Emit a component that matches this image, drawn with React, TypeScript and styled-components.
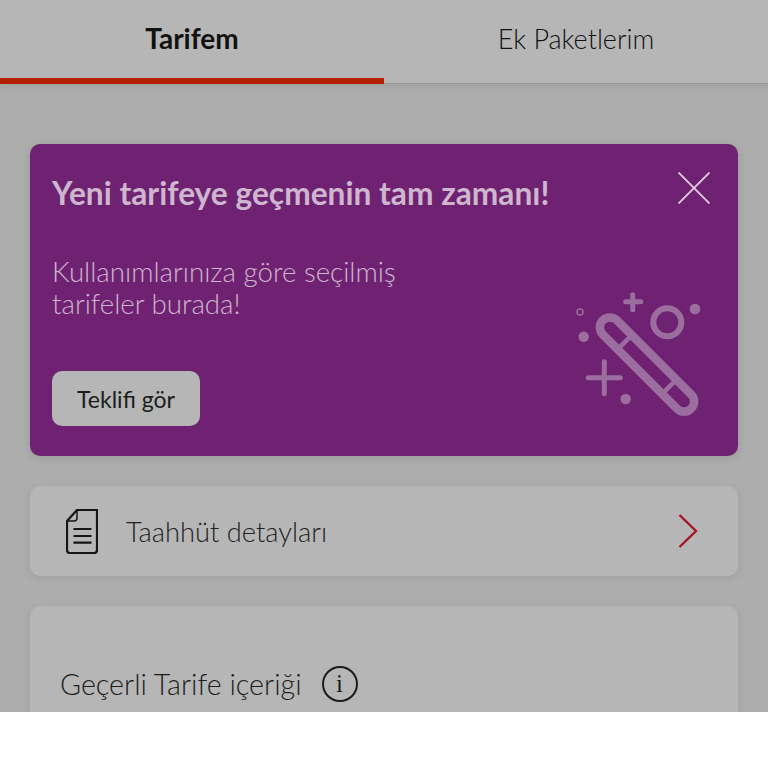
import React from 'react';
import styled, { createGlobalStyle } from 'styled-components';

const GlobalStyle = createGlobalStyle`
  html, body {
    margin: 0;
    padding: 0;
    background-color: #ffffff;
    font-family: "Lato", "Liberation Sans", sans-serif;
  }
`;

const Page = styled.div`
  height: 712px;
  overflow: hidden;
  background-color: #adadad;
`;

const Tabs = styled.div`
  display: flex;
  height: 84px;
  background-color: #b6b6b6;
  box-shadow: 0 2px 8px rgba(0, 0, 0, 0.08);
`;
const Tab = styled.div<{active?:boolean}>`
  flex: 1;
  display: flex;
  align-items: center;
  justify-content: center;
  box-sizing: border-box;
  height: 84px;
  padding-bottom: ${props => props.active ? '2px' : '7px'};
  font-size: ${props => props.active ? '28px' : '27px'};
  font-weight: ${props => props.active ? '700' : '300'};
  color: #111111;
  border-bottom: ${props => props.active ? '6px solid #b32000' : '1px solid #979797'};
`;

const Content = styled.div`
  display: flex;
  flex-direction: column;
  gap: 30px;
  padding: 60px 30px 0;
`;

const Promo = styled.div`
  display: flex;
  justify-content: space-between;
  height: 312px;
  box-sizing: border-box;
  padding: 28px 28px 33px 22px;
  border-radius: 10px;
  background-color: #702272;
  box-shadow: 0 2px 8px rgba(0, 0, 0, 0.12);
`;
const PromoText = styled.div`
  display: flex;
  flex-direction: column;
  align-items: flex-start;
  padding-top: 2px;
`;
const PromoTitle = styled.div`
  font-size: 31.7px;
  line-height: 38px;
  font-weight: 700;
  color: #cdb6ce;
  white-space: nowrap;
`;
const PromoBody = styled.div`
  margin-top: 44px;
  font-size: 27.7px;
  line-height: 32px;
  font-weight: 300;
  color: #cdb6ce;
`;
const PromoButton = styled.div`
  margin-top: 51px;
  flex-shrink: 0;
  width: 148px;
  height: 55px;
  display: flex;
  align-items: center;
  justify-content: center;
  border-radius: 10px;
  background-color: #b6b6b6;
  font-size: 23px;
  color: #1d1d1d;
`;
const PromoSide = styled.div`
  display: flex;
  flex-direction: column;
  align-items: flex-end;
  justify-content: space-between;
`;
const WandArt = styled.svg`
  display: block;
  margin-right: 5px;
`;

const Card = styled.div`
  background-color: #b6b6b6;
  border-radius: 10px;
  box-shadow: 0 2px 8px rgba(0, 0, 0, 0.08);
`;
const LinkRow = styled(Card)`
  display: flex;
  align-items: center;
  height: 90px;
  padding: 0 40px 0 36px;
`;
const LinkLabel = styled.div`
  flex: 1;
  margin-left: 28px;
  font-size: 27.3px;
  font-weight: 300;
  color: #222222;
`;
const ContentCard = styled(Card)`
  height: 200px;
  box-sizing: border-box;
  padding: 58px 30px 0;
`;
const SectionTitle = styled.div`
  display: flex;
  align-items: center;
  gap: 20px;
  font-size: 28.7px;
  line-height: 40px;
  font-weight: 300;
  color: #1c1c1c;
`;
const InfoBadge = styled.span`
  width: 36px;
  height: 36px;
  box-sizing: border-box;
  display: flex;
  align-items: center;
  justify-content: center;
  border: 2px solid #1c1c1c;
  border-radius: 50%;
  font-family: "Liberation Serif", serif;
  font-size: 25px;
  font-weight: 400;
`;

const CloseIcon = () => (
  <svg width="32" height="32" viewBox="0 0 32 32" fill="none" stroke="#e0cde1" strokeWidth="1.8">
    <path d="M0.5 0.5 L31.5 31.5 M31.5 0.5 L0.5 31.5" />
  </svg>
);

const Wand = () => (
  <WandArt width="135" height="138" viewBox="0 0 135 138" fill="none" stroke="#9c6d9f">
    <g transform="rotate(45 77 79.5)" strokeWidth="8.5">
      <rect x="14.5" y="69.5" width="125" height="20" rx="10" />
      <path d="M45.5 69.5 V89.5 M108.5 69.5 V89.5" strokeWidth="4.5" />
    </g>
    <circle cx="97.3" cy="37.3" r="14" strokeWidth="6" />
    <circle cx="10" cy="27" r="3" strokeWidth="1.5" />
    <path d="M55.7 16.7 H70.7 M62.7 9.7 V24.7 M18.3 92.7 H50.3 M34.3 76.7 V108.7" strokeWidth="5" strokeLinecap="round" />
    <g fill="#9c6d9f" stroke="none">
      <circle cx="125" cy="24" r="5.3" />
      <circle cx="13.7" cy="51.7" r="5.2" />
      <circle cx="55.7" cy="114" r="5.2" />
    </g>
  </WandArt>
);

const DocIcon = () => (
  <svg width="32" height="45" viewBox="0 0 32 45" fill="none" stroke="#151515" strokeWidth="2.2" strokeLinejoin="round">
    <path d="M31 1 V41 Q31 44 28 44 H4 Q1 44 1 41 V12 L11 1 Z" />
    <path d="M11 1 V9 Q11 12 8 12 H1" strokeWidth="1.5" />
    <path d="M7.5 20 H25.5 M7.5 27 H25.5 M7.5 33.7 H25.5" />
  </svg>
);

const Chevron = () => (
  <svg width="20" height="34" viewBox="0 0 20 34" fill="none" stroke="#a51525" strokeWidth="2.4">
    <path d="M1.5 1 L18 17 L1.5 33" />
  </svg>
);

export default function App() {
  return <Page>
    <GlobalStyle />
    <Tabs>
      <Tab active>Tarifem</Tab>
      <Tab>Ek Paketlerim</Tab>
    </Tabs>
    <Content>
      <Promo>
        <PromoText>
          <PromoTitle>Yeni tarifeye geçmenin tam zamanı!</PromoTitle>
          <PromoBody>Kullanımlarınıza göre seçilmiş<br />tarifeler burada!</PromoBody>
          <PromoButton>Teklifi gör</PromoButton>
        </PromoText>
        <PromoSide>
          <CloseIcon />
          <Wand />
        </PromoSide>
      </Promo>
      <LinkRow>
        <DocIcon />
        <LinkLabel>Taahhüt detayları</LinkLabel>
        <Chevron />
      </LinkRow>
      <ContentCard>
        <SectionTitle>
          Geçerli Tarife içeriği
          <InfoBadge>i</InfoBadge>
        </SectionTitle>
      </ContentCard>
    </Content>
  </Page>;
}
